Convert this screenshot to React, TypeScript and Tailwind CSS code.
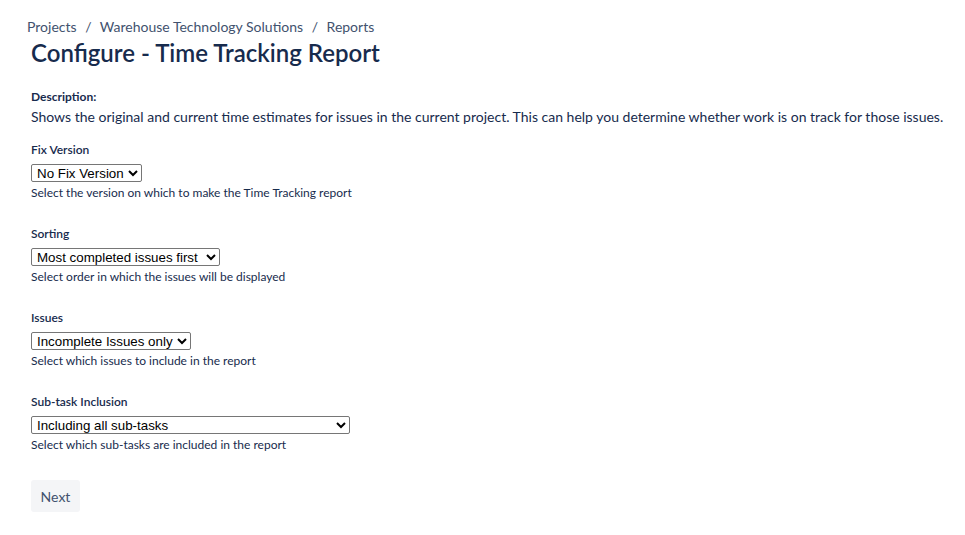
import { useState } from 'react';

const Field = ({
  label,
  help,
  value,
  options,
  width,
  onChange,
}: {
  label: string;
  help: string;
  value: string;
  options: string[];
  width: string;
  onChange: (v: string) => void;
}) => (
  <div className="mb-[25px]">
    <label className="block text-[12px] font-semibold leading-[16px] text-[#172b4d] mb-[6px]">{label}</label>
    <select
      value={value}
      onChange={(e) => onChange(e.target.value)}
      className={`${width} block h-[18px] border border-[#767676] rounded-[2px] bg-white text-black font-['Liberation_Sans',Arial,sans-serif] text-[13.33px] leading-[16px] pl-[1px]`}
    >
      {options.map((o) => (
        <option key={o} value={o}>
          {o}
        </option>
      ))}
    </select>
    <div className="text-[12px] leading-[16px] text-[#172b4d] mt-[3px]">{help}</div>
  </div>
);

export default function App() {
  const [fixVersion, setFixVersion] = useState('No Fix Version');
  const [sorting, setSorting] = useState('Most completed issues first');
  const [issues, setIssues] = useState('Incomplete Issues only');
  const [subtasks, setSubtasks] = useState('Including all sub-tasks');

  return (
    <div className="min-h-screen bg-white font-['Lato',sans-serif] text-[#172b4d]">
      <div className="pt-[17px] pl-[27px] text-[14px] leading-[20px] text-[#42526e]">
        Projects <span className="mx-[5px]">/</span> Warehouse Technology Solutions <span className="mx-[5px]">/</span> Reports
      </div>
      <div className="pl-[31px]">
        <h1 className="text-[24px] font-semibold leading-[32px] text-[#172b4d]">Configure - Time Tracking Report</h1>

        <div className="mt-[20px]">
          <div className="text-[12px] font-bold leading-[16px]">Description:</div>
          <div className="text-[14px] leading-[20px] mt-[2px] whitespace-nowrap">
            Shows the original and current time estimates for issues in the current project. This can help you determine whether work is on track for those issues.
          </div>
        </div>

        <div className="mt-[15px]">
          <Field
            label="Fix Version"
            help="Select the version on which to make the Time Tracking report"
            value={fixVersion}
            options={['No Fix Version']}
            width="w-[111px]"
            onChange={setFixVersion}
          />
          <Field
            label="Sorting"
            help="Select order in which the issues will be displayed"
            value={sorting}
            options={['Least completed issues first', 'Most completed issues first']}
            width="w-[189px]"
            onChange={setSorting}
          />
          <Field
            label="Issues"
            help="Select which issues to include in the report"
            value={issues}
            options={['All Issues', 'Incomplete Issues only']}
            width="w-[160px]"
            onChange={setIssues}
          />
          <Field
            label="Sub-task Inclusion"
            help="Select which sub-tasks are included in the report"
            value={subtasks}
            options={['Only including sub-tasks with the selected version', 'Also including sub-tasks without a version set', 'Including all sub-tasks']}
            width="w-[319px]"
            onChange={setSubtasks}
          />
        </div>

        <button
          type="button"
          className="mt-[2px] h-[32px] w-[49px] rounded-[3px] bg-[#f4f5f7] text-[14px] text-[#42526e] hover:bg-[#ebecf0]"
        >
          Next
        </button>
      </div>
    </div>
  );
}
